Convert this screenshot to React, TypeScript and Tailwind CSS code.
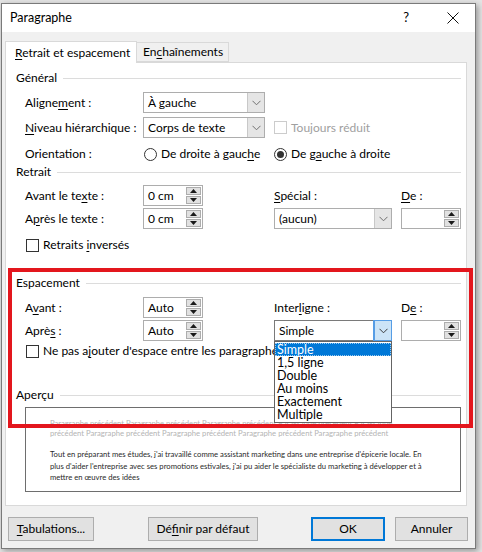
import React from 'react';

const U = ({ children }: { children: React.ReactNode }) => (
  <span className="underline underline-offset-[2px] decoration-[1px]">{children}</span>
);

const Chevron = ({ color = '#606060' }: { color?: string }) => (
  <svg width="9" height="6" viewBox="0 0 9 6">
    <path d="M0.5 0.8 L4.5 4.8 L8.5 0.8" fill="none" stroke={color} strokeWidth="1" />
  </svg>
);

const Select = ({ value, width, active }: { value: string; width: string; active?: boolean }) => (
  <div className={`flex h-[21px] border ${active ? 'border-[#7a7a7a]' : 'border-[#adadad]'} bg-white ${width}`}>
    <div className="flex flex-1 items-center whitespace-nowrap pl-[4px]">{value}</div>
    <div
      className={`flex w-[17px] items-center justify-center border-l ${
        active ? 'border-[#569de5] bg-[#cce4f7] outline outline-1 outline-[#569de5]' : 'border-[#c8c8c8] bg-[#e5e5e5]'
      }`}
    >
      <Chevron color={active ? '#3b3b3b' : '#707070'} />
    </div>
  </div>
);

const Spin = ({ value = '' }: { value?: string }) => (
  <div className="flex h-[21px] w-[60px] border border-[#adadad] bg-white">
    <div className="flex flex-1 items-center pl-[4px]">{value}</div>
    <div className="flex w-[16px] flex-col justify-center gap-[1px] pr-[1px]">
      <div className="flex h-[8px] items-center justify-center border border-[#adadad] bg-[#e1e1e1]">
        <svg width="7" height="4" viewBox="0 0 7 4"><path d="M0 4 L3.5 0 L7 4 Z" fill="#1a1a1a" /></svg>
      </div>
      <div className="flex h-[8px] items-center justify-center border border-[#adadad] bg-[#e1e1e1]">
        <svg width="7" height="4" viewBox="0 0 7 4"><path d="M0 0 L3.5 4 L7 0 Z" fill="#1a1a1a" /></svg>
      </div>
    </div>
  </div>
);

const Check = ({ disabled }: { disabled?: boolean }) => (
  <div className={`h-[13px] w-[13px] shrink-0 border bg-white ${disabled ? 'border-[#cccccc]' : 'border-[#333333]'}`} />
);

const Radio = ({ checked }: { checked?: boolean }) => (
  <div className="flex h-[13px] w-[13px] shrink-0 items-center justify-center rounded-full border border-[#333333] bg-white">
    {checked && <div className="h-[7px] w-[7px] rounded-full bg-[#333333]" />}
  </div>
);

const Group = ({ title, mt }: { title: string; mt: string }) => (
  <div className={`flex h-[16px] items-center pl-[10px] pr-[5px] ${mt}`}>
    <span className="whitespace-nowrap">{title}</span>
    <div className="ml-[6px] h-px flex-1 bg-[#dcdcdc]" />
  </div>
);

const rowGrid = 'grid grid-cols-[118px_131px_127px_60px] items-center whitespace-nowrap pl-[19px]';

const Btn = ({ children, width, ml, primary }: { children: React.ReactNode; width: string; ml: string; primary?: boolean }) => (
  <div
    className={`flex h-[24px] items-center justify-center whitespace-nowrap bg-[#e1e1e1] ${width} ${ml} ${
      primary ? 'border-2 border-[#0078d7]' : 'border border-[#adadad]'
    }`}
  >
    {children}
  </div>
);

const items = ['Simple', '1,5 ligne', 'Double', 'Au moins', 'Exactement', 'Multiple'];

export default function App() {
  return (
    <div
      className="relative h-[552px] w-[482px] overflow-hidden bg-[#e4e4e4] text-[12px] text-black"
      style={{ fontFamily: 'Lato, "Noto Sans", sans-serif' }}
    >
      <div className="ml-[1px] mt-[3px] h-[546px] w-[475px] border border-[#7a7a7a] bg-[#f0f0f0] shadow-[2px_2px_6px_rgba(0,0,0,0.35)]">
        {/* title bar */}
        <div className="flex h-[28px] items-center bg-white pl-[8px]">
          <span className="text-[12.5px]">Paragraphe</span>
          <span className="ml-auto mr-[38px] text-[13px]">?</span>
          <svg width="12" height="12" viewBox="0 0 12 12" className="mr-[16px]">
            <path d="M0.5 0.5 L11.5 11.5 M11.5 0.5 L0.5 11.5" stroke="#111" strokeWidth="1" />
          </svg>
        </div>

        <div className="px-[3px] pt-[9px]">
          {/* tabs */}
          <div className="relative z-10 flex h-[21px] items-end whitespace-nowrap">
            <div className="-mb-px flex h-[22px] w-[132px] items-center border border-b-0 border-[#d9d9d9] bg-white pl-[9px]">
              <span><U>R</U>etrait et espacement</span>
            </div>
            <div className="flex h-[20px] w-[92px] items-center border border-l-0 border-[#d9d9d9] bg-[#f0f0f0] pl-[6px]">
              <span>En<U>c</U>haînements</span>
            </div>
          </div>

          {/* panel */}
          <div className="w-[462px] border border-[#d9d9d9] bg-white pb-[13px]">
            <Group title="Général" mt="mt-[7px]" />
            <div className={`${rowGrid} mt-[6px] h-[21px]`}>
              <span>Aligne<U>m</U>ent :</span>
              <Select value="À gauche" width="w-[122px]" />
            </div>
            <div className={`${rowGrid} mt-[4px] h-[21px]`}>
              <span><U>N</U>iveau hiérarchique :</span>
              <Select value="Corps de texte" width="w-[122px]" />
              <div className="flex items-center gap-[4px] text-[#a0a0a0]">
                <Check disabled />
                <span>Toujours réduit</span>
              </div>
            </div>
            <div className={`${rowGrid} mt-[7px] h-[18px]`}>
              <span>Orientation :</span>
              <div className="ml-[1px] flex items-center gap-[4px]">
                <Radio />
                <span>De droite à gauc<U>h</U>e</span>
              </div>
              <div className="col-span-2 flex items-center gap-[4px]">
                <Radio checked />
                <span>De g<U>a</U>uche à droite</span>
              </div>
            </div>

            <Group title="Retrait" mt="mt-[1px]" />
            <div className={`${rowGrid} mt-[5px] h-[21px]`}>
              <span>Avant le te<U>x</U>te :</span>
              <Spin value="0 cm" />
              <span><U>S</U>pécial :</span>
              <span><U>D</U>e :</span>
            </div>
            <div className={`${rowGrid} mt-[2px] h-[21px]`}>
              <span>A<U>p</U>rès le texte :</span>
              <Spin value="0 cm" />
              <Select value="(aucun)" width="w-[118px]" />
              <Spin />
            </div>
            <div className="ml-[20px] mt-[8px] flex h-[16px] items-center gap-[4px]">
              <Check />
              <span>Retraits <U>i</U>nversés</span>
            </div>

            <Group title="Espacement" mt="mt-[22px]" />
            <div className={`${rowGrid} mt-[6px] h-[21px]`}>
              <span>A<U>v</U>ant :</span>
              <Spin value="Auto" />
              <span>Inter<U>l</U>igne :</span>
              <span>D<U>e</U> :</span>
            </div>
            <div className={`${rowGrid} relative z-20 mt-[2px] h-[21px]`}>
              <span>Aprè<U>s</U> :</span>
              <Spin value="Auto" />
              <div className="relative">
                <Select value="Simple" width="w-[118px]" active />
                <div className="absolute left-0 top-[21px] w-[118px] border border-[#646464] bg-white py-px text-[12.5px] leading-[13px]">
                  {items.map((it, i) => (
                    <div
                      key={it}
                      className={`h-[13px] pl-[2px] ${i === 0 ? 'bg-[#0078d7] text-white outline outline-1 -outline-offset-1 outline-dotted outline-[#99c9ef]' : ''}`}
                    >
                      {it}
                    </div>
                  ))}
                </div>
              </div>
              <Spin />
            </div>
            <div className="ml-[20px] mt-[2px] flex h-[16px] w-[248px] items-center gap-[4px] overflow-hidden whitespace-nowrap">
              <Check />
              <span>Ne pas a<U>j</U>outer d'espace entre les paragraphes du même style</span>
            </div>

            <Group title="Aperçu" mt="mt-[28px]" />
            <div className="ml-[19px] mt-[4px] h-[85px] w-[436px] overflow-hidden border border-[#6e6e6e] bg-white pl-[24px] pt-[10px] text-[7.7px] leading-[10px]">
              <div className="whitespace-nowrap text-[#b4b4b4]">
                Paragraphe précédent Paragraphe précédent Paragraphe précédent Paragraphe précédent Paragraphe
              </div>
              <div className="whitespace-nowrap text-[#b4b4b4]">
                précédent Paragraphe précédent Paragraphe précédent Paragraphe précédent Paragraphe précédent
              </div>
              <div className="mt-[11px] leading-[11.5px] text-[#2a2a2a]">
                <div className="whitespace-nowrap">
                  Tout en préparant mes études, j'ai travaillé comme assistant marketing dans une entreprise d'épicerie locale. En
                </div>
                <div className="whitespace-nowrap">
                  plus d'aider l'entreprise avec ses promotions estivales, j'ai pu aider le spécialiste du marketing à développer et à
                </div>
                <div className="whitespace-nowrap">mettre en œuvre des idées</div>
              </div>
            </div>
          </div>

          {/* buttons */}
          <div className="mt-[11px] flex pl-[3px]">
            <Btn width="w-[86px]" ml="ml-0"><span><U>T</U>abulations...</span></Btn>
            <Btn width="w-[110px]" ml="ml-[54px]"><span>Dé<U>f</U>inir par défaut</span></Btn>
            <Btn width="w-[74px]" ml="ml-[53px]" primary>OK</Btn>
            <Btn width="w-[73px]" ml="ml-[10px]">Annuler</Btn>
          </div>
        </div>
      </div>

      {/* red annotation box */}
      <div className="pointer-events-none absolute left-[8px] top-[268px] z-30 h-[160px] w-[465px] border-[4px] border-[#e3161d]" />
    </div>
  );
}
